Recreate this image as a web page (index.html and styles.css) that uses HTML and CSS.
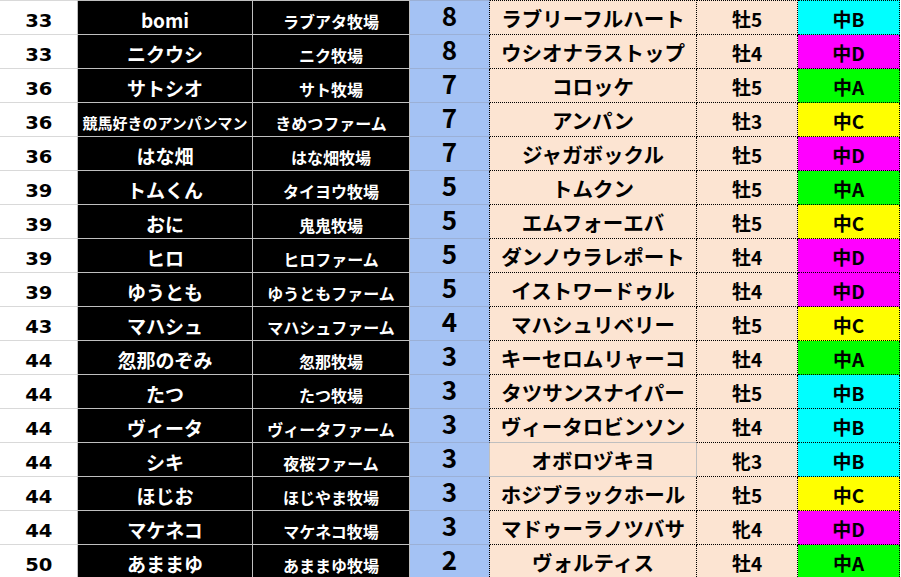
FILE: index.html
```html
<!DOCTYPE html>
<html lang="ja">
<head>
<meta charset="utf-8">
<title>Sheet</title>
<link rel="stylesheet" href="styles.css">
</head>
<body>
<div class="sheet">
  <div class="row first"><div class="c c1"><span class="rk">33</span></div><div class="c c2">bomi</div><div class="c c3">ラブアタ牧場</div><div class="c c4">8</div><div class="c c5">ラブリーフルハート</div><div class="c c6">牡5</div><div class="c c7 cy">中B</div></div>
  <div class="row"><div class="c c1"><span class="rk">33</span></div><div class="c c2">ニクウシ</div><div class="c c3">ニク牧場</div><div class="c c4">8</div><div class="c c5">ウシオナラストップ</div><div class="c c6">牡4</div><div class="c c7 mg">中D</div></div>
  <div class="row"><div class="c c1"><span class="rk">36</span></div><div class="c c2">サトシオ</div><div class="c c3">サト牧場</div><div class="c c4">7</div><div class="c c5">コロッケ</div><div class="c c6">牡5</div><div class="c c7 gr">中A</div></div>
  <div class="row"><div class="c c1"><span class="rk">36</span></div><div class="c c2 small">競馬好きのアンパンマン</div><div class="c c3">きめつファーム</div><div class="c c4">7</div><div class="c c5">アンパン</div><div class="c c6">牡3</div><div class="c c7 ye">中C</div></div>
  <div class="row"><div class="c c1"><span class="rk">36</span></div><div class="c c2">はな畑</div><div class="c c3">はな畑牧場</div><div class="c c4">7</div><div class="c c5">ジャガボックル</div><div class="c c6">牡5</div><div class="c c7 mg">中D</div></div>
  <div class="row"><div class="c c1"><span class="rk">39</span></div><div class="c c2">トムくん</div><div class="c c3">タイヨウ牧場</div><div class="c c4">5</div><div class="c c5">トムクン</div><div class="c c6">牡5</div><div class="c c7 gr">中A</div></div>
  <div class="row"><div class="c c1"><span class="rk">39</span></div><div class="c c2">おに</div><div class="c c3">鬼鬼牧場</div><div class="c c4">5</div><div class="c c5">エムフォーエバ</div><div class="c c6">牡5</div><div class="c c7 ye">中C</div></div>
  <div class="row"><div class="c c1"><span class="rk">39</span></div><div class="c c2">ヒロ</div><div class="c c3">ヒロファーム</div><div class="c c4">5</div><div class="c c5">ダンノウラレポート</div><div class="c c6">牡4</div><div class="c c7 mg">中D</div></div>
  <div class="row"><div class="c c1"><span class="rk">39</span></div><div class="c c2">ゆうとも</div><div class="c c3">ゆうともファーム</div><div class="c c4">5</div><div class="c c5">イストワードゥル</div><div class="c c6">牡4</div><div class="c c7 mg">中D</div></div>
  <div class="row"><div class="c c1"><span class="rk">43</span></div><div class="c c2">マハシュ</div><div class="c c3">マハシュファーム</div><div class="c c4">4</div><div class="c c5">マハシュリベリー</div><div class="c c6">牡5</div><div class="c c7 ye">中C</div></div>
  <div class="row"><div class="c c1"><span class="rk">44</span></div><div class="c c2">忽那のぞみ</div><div class="c c3">忽那牧場</div><div class="c c4">3</div><div class="c c5">キーセロムリャーコ</div><div class="c c6">牡4</div><div class="c c7 gr">中A</div></div>
  <div class="row"><div class="c c1"><span class="rk">44</span></div><div class="c c2">たつ</div><div class="c c3">たつ牧場</div><div class="c c4">3</div><div class="c c5">タツサンスナイパー</div><div class="c c6">牡5</div><div class="c c7 cy">中B</div></div>
  <div class="row"><div class="c c1"><span class="rk">44</span></div><div class="c c2">ヴィータ</div><div class="c c3">ヴィータファーム</div><div class="c c4">3</div><div class="c c5 gb">ヴィータロビンソン</div><div class="c c6">牡4</div><div class="c c7 cy">中B</div></div>
  <div class="row plain"><div class="c c1"><span class="rk">44</span></div><div class="c c2">シキ</div><div class="c c3">夜桜ファーム</div><div class="c c4">3</div><div class="c c5">オボロヅキヨ</div><div class="c c6">牝3</div><div class="c c7 cy">中B</div></div>
  <div class="row"><div class="c c1"><span class="rk">44</span></div><div class="c c2">ほじお</div><div class="c c3">ほじやま牧場</div><div class="c c4">3</div><div class="c c5">ホジブラックホール</div><div class="c c6">牡5</div><div class="c c7 ye">中C</div></div>
  <div class="row"><div class="c c1"><span class="rk">44</span></div><div class="c c2">マケネコ</div><div class="c c3">マケネコ牧場</div><div class="c c4">3</div><div class="c c5">マドゥーラノツバサ</div><div class="c c6">牝4</div><div class="c c7 mg">中D</div></div>
  <div class="row"><div class="c c1"><span class="rk">50</span></div><div class="c c2">あままゆ</div><div class="c c3">あままゆ牧場</div><div class="c c4">2</div><div class="c c5">ヴォルティス</div><div class="c c6">牡4</div><div class="c c7 gr">中A</div></div>
</div>
</body>
</html>
```

FILE: styles.css
```css
* { box-sizing: border-box; }
html, body { margin: 0; padding: 0; background: #ffffff; }
body { width: 901px; height: 577px; overflow: hidden; }

.sheet {
  display: flex;
  flex-direction: column;
  width: 901px;
  font-family: "Noto Sans CJK JP", "Noto Sans", sans-serif;
  font-weight: 700;
}

.row {
  display: grid;
  grid-template-columns: 78px 175px 157px 80px 207px 101px 102px;
  grid-template-rows: 100%;
  height: 34px;
  flex: none;
}
.row.first { height: 35px; }

.c {
  display: flex;
  align-items: center;
  justify-content: center;
  white-space: nowrap;
  min-height: 0;
  line-height: 1.2;
  border-right: 1px solid #bfbfbf;
  border-bottom: 1px solid #bfbfbf;
}
.first .c { border-top: 1px solid #bfbfbf; }

.c1 {
  background: #ffffff;
  color: #000000;
  border-bottom-color: #d9d9d9;
  padding-top: 7px;
}
.first .c1 { border-top-color: #d9d9d9; }
.rk {
  display: inline-block;
  font-family: "DejaVu Sans", sans-serif;
  font-size: 17px;
  font-weight: 700;
  transform: scaleX(1.15);
}

.c2 {
  background: #000000;
  color: #ffffff;
  font-size: 19px;
  padding-top: 6px;
}
.c2.small { font-size: 15px; padding-top: 7px; }

.c3 {
  background: #000000;
  color: #ffffff;
  font-size: 16px;
  padding-top: 9px;
}

.c4 {
  background: #a4c2f4;
  color: #000000;
  font-size: 26px;
  line-height: 1.1;
  padding-bottom: 4px;
  border-bottom-color: #9bb0d6;
  border-right: 1px dotted #000000;
}
.first .c4 { border-top-color: #9bb0d6; }

.c5, .c6, .c7 {
  color: #000000;
  border-right: 1px dotted #000000;
  border-bottom: 1px dotted #000000;
}
.first .c5, .first .c6, .first .c7 { border-top: 1px dotted #000000; }

.c5 { background: #fce4d2; font-size: 20.5px; padding-top: 1px; }
.c6 { background: #fce4d2; font-size: 19px; padding-top: 4px; }
.c7 { font-size: 19px; padding-top: 4px; }

.c5.gb { border-bottom: 1px solid #bfbfbf; }
.plain .c4 { border-right: 1px solid #bfbfbf; }
.plain .c5 { border-right: 1px solid #bfbfbf; border-bottom: 1px solid #bfbfbf; }

.cy { background: #00ffff; }
.mg { background: #ff00ff; }
.gr { background: #00ff00; }
.ye { background: #ffff00; }
```
